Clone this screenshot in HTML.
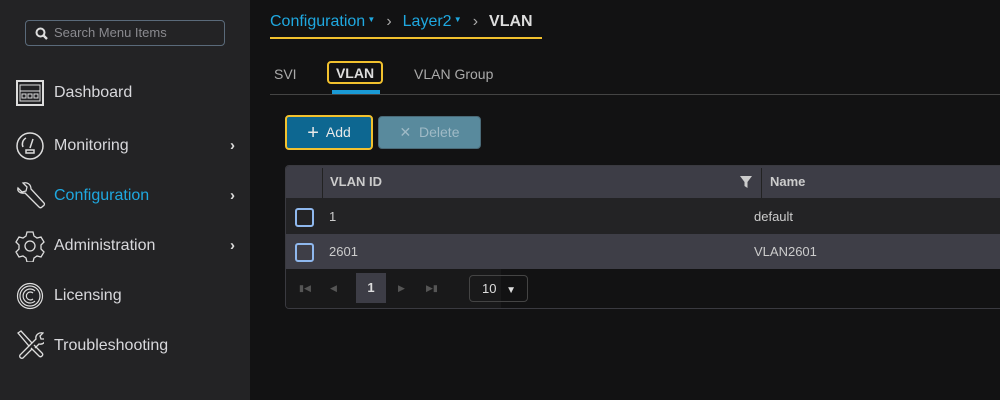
<!DOCTYPE html>
<html><head><meta charset="utf-8"><style>
*{box-sizing:border-box;margin:0;padding:0}
body{width:1000px;height:400px;background:#121213;font-family:"Liberation Sans",sans-serif;position:relative;overflow:hidden;color:#ccc}
.sb{position:absolute;left:0;top:0;width:250px;height:400px;background:#232325}
.search{position:absolute;left:25px;top:20px;width:200px;height:26px;border:1px solid #5a6a7a;border-radius:4px;color:#8a8a8f;font-size:13px;line-height:24px;padding-left:28px}
.item{position:absolute;left:54px;font-size:16px;color:#d8d8dc}
.ic{position:absolute;left:14px}
.chev{position:absolute;left:230px;font-size:15px;color:#ddd;font-weight:bold}
.a{position:absolute}
</style></head><body>
<div class="sb">
<div class="search">Search Menu Items
<svg class="a" style="left:9px;top:6px" width="13" height="13" viewBox="0 0 13 13"><circle cx="5.5" cy="5.5" r="4" stroke="#ddd" stroke-width="2" fill="none"/><line x1="8.5" y1="8.5" x2="12" y2="12" stroke="#ddd" stroke-width="2.4"/></svg></div>

<svg class="ic" style="top:80px;left:16px" width="29" height="26" viewBox="0 0 29 26" fill="none" stroke="#ddd"><rect x="1" y="1" width="26" height="24" stroke-width="2"/><rect x="4" y="5" width="20" height="16" stroke-width="1"/><line x1="4" y1="11" x2="24" y2="11"/><rect x="6" y="14" width="4" height="4"/><rect x="12" y="14" width="4" height="4"/><rect x="18" y="14" width="4" height="4"/></svg>
<div class="item" style="top:84px">Dashboard</div>

<svg class="ic" style="top:131px;left:15px" width="30" height="30" viewBox="0 0 30 30" fill="none" stroke="#ddd" stroke-width="1.5"><circle cx="15" cy="15" r="13"/><path d="M8 16a7 7 0 0 1 3-9"/><line x1="15" y1="17" x2="18" y2="8"/><rect x="11" y="19" width="8" height="3"/></svg>
<div class="item" style="top:137px">Monitoring</div><div class="chev" style="top:137px">&#x203A;</div>

<svg class="ic" style="top:180px" width="32" height="32" viewBox="0 0 32 32" fill="none" stroke="#ddd" stroke-width="1.3"><path d="M4 8l4 4 4-1 1-4-4-4c4-1 8 1 8 6l13 14c1 1 0 3-1 3l-1 1c-1 1-2 1-3 0L11 13c-5 1-8-2-7-5z"/></svg>
<div class="item" style="top:187px;color:#1fa8e0">Configuration</div><div class="chev" style="top:187px">&#x203A;</div>

<svg class="ic" style="top:230px" width="32" height="32" viewBox="0 0 32 32" fill="none" stroke="#ddd" stroke-width="1.3"><path d="M13 2h6l1 4 3 2 4-1 3 5-3 3v4l3 3-3 5-4-1-3 2-1 4h-6l-1-4-3-2-4 1-3-5 3-3v-4l-3-3 3-5 4 1 3-2z"/><circle cx="16" cy="16" r="5"/></svg>
<div class="item" style="top:237px">Administration</div><div class="chev" style="top:237px">&#x203A;</div>

<svg class="ic" style="top:282px;left:16px" width="28" height="28" viewBox="0 0 28 28" fill="none" stroke="#ddd" stroke-width="1.2"><circle cx="14" cy="14" r="12.5"/><circle cx="14" cy="14" r="10"/><path d="M19 9a7 7 0 1 0 0 10"/><path d="M17 11a4 4 0 1 0 0 6"/></svg>
<div class="item" style="top:287px">Licensing</div>

<svg class="ic" style="top:330px;left:16px" width="28" height="30" viewBox="0 0 28 30" fill="none" stroke="#ddd" stroke-width="1.3"><path d="M2 3l3-2 11 12-3 3z"/><path d="M13 16l-9 9c-1 2 1 4 3 3l9-9"/><path d="M16 13l4-4c-1-4 3-7 7-6l-3 3 1 3 3 0 2-2c1 4-3 8-7 7l-4 4"/><path d="M15 18l8 8c1 1 2 1 3 0s1-2 0-3l-8-8"/></svg>
<div class="item" style="top:337px">Troubleshooting</div>
</div>

<div class="a" style="left:270px;top:13px;font-size:16px;color:#1fa8e0;white-space:nowrap">Configuration<span style="font-size:8px;vertical-align:4px"> ▼</span><span style="color:#aaa;margin:0 11px 0 11px">›</span>Layer2<span style="font-size:8px;vertical-align:4px"> ▼</span><span style="color:#aaa;margin:0 11px 0 11px">›</span><b style="color:#ddd">VLAN</b></div>
<div class="a" style="left:270px;top:37px;width:272px;height:2px;background:#f2c12e"></div>

<div class="a" style="left:274px;top:66px;font-size:14px;color:#aaa">SVI</div>
<div class="a" style="left:327px;top:61px;width:56px;height:23px;border:2px solid #f2c12e;border-radius:4px;font-size:14px;color:#ddd;font-weight:bold;text-align:center;line-height:20px">VLAN</div>
<div class="a" style="left:414px;top:66px;font-size:14px;color:#aaa">VLAN Group</div>
<div class="a" style="left:332px;top:90px;width:48px;height:4px;background:#1a9ad6"></div>
<div class="a" style="left:270px;top:94px;width:730px;height:1px;background:#444"></div>

<div class="a" style="left:285px;top:115px;width:88px;height:35px;border:2px solid #f2c12e;border-radius:4px;background:#0d6791;color:#e8e8e8;font-size:14px;line-height:31px;text-align:center"><span style="font-size:20px;font-weight:300;vertical-align:-2px">+</span>&nbsp; Add</div>
<div class="a" style="left:378px;top:116px;width:103px;height:33px;border:1px solid #4a6a78;border-radius:4px;background:#598a9d;color:#9fbac6;font-size:14px;line-height:31px;text-align:center">✕&nbsp; Delete</div>

<div class="a" style="left:285px;top:165px;width:720px;height:144px;border:1px solid #3a3a40;border-radius:4px;overflow:hidden">
<div class="a" style="left:0;top:0;width:720px;height:32px;background:#3d3d46"></div>
<div class="a" style="left:36px;top:2px;width:1px;height:30px;background:#222"></div>
<div class="a" style="left:475px;top:2px;width:1px;height:30px;background:#222"></div>
<div class="a" style="left:44px;top:8px;font-size:13px;font-weight:bold;color:#ccc">VLAN ID</div>
<svg class="a" style="left:453px;top:9px" width="14" height="14" viewBox="0 0 14 14"><path d="M1 1h12L8.5 7v6L5.5 11V7z" fill="#ccc"/></svg>
<div class="a" style="left:484px;top:8px;font-size:13px;font-weight:bold;color:#ccc">Name</div>
<div class="a" style="left:0;top:32px;width:720px;height:36px;background:#232325"></div>
<div class="a" style="left:0;top:68px;width:720px;height:35px;background:#3e3e47"></div>
<div class="a" style="left:9px;top:42px;width:19px;height:19px;border:2px solid #8fb8ee;border-radius:3px"></div>
<div class="a" style="left:9px;top:77px;width:19px;height:19px;border:2px solid #8fb8ee;border-radius:3px"></div>
<div class="a" style="left:43px;top:43px;font-size:13px;color:#ccc">1</div>
<div class="a" style="left:43px;top:78px;font-size:13px;color:#ccc">2601</div>
<div class="a" style="left:468px;top:43px;font-size:13px;color:#ccc">default</div>
<div class="a" style="left:468px;top:78px;font-size:13px;color:#ccc">VLAN2601</div>
<div class="a" style="left:0;top:103px;width:215px;height:40px;background:#19191a"></div>
<div class="a" style="left:13px;top:117px;font-size:9px;color:#555">▮◀</div>
<div class="a" style="left:44px;top:117px;font-size:9px;color:#555">◀</div>
<div class="a" style="left:70px;top:107px;width:30px;height:30px;background:#3d3d46;color:#ddd;font-size:13px;font-weight:bold;text-align:center;line-height:30px">1</div>
<div class="a" style="left:112px;top:117px;font-size:9px;color:#555">▶</div>
<div class="a" style="left:140px;top:117px;font-size:9px;color:#555">▶▮</div>
<div class="a" style="left:183px;top:109px;width:59px;height:27px;border:1px solid #444;border-radius:4px;color:#ddd;font-size:13px;line-height:25px;padding-left:12px">10 <span style="font-size:10px;margin-left:6px">▼</span></div>
</div>
</body></html>
